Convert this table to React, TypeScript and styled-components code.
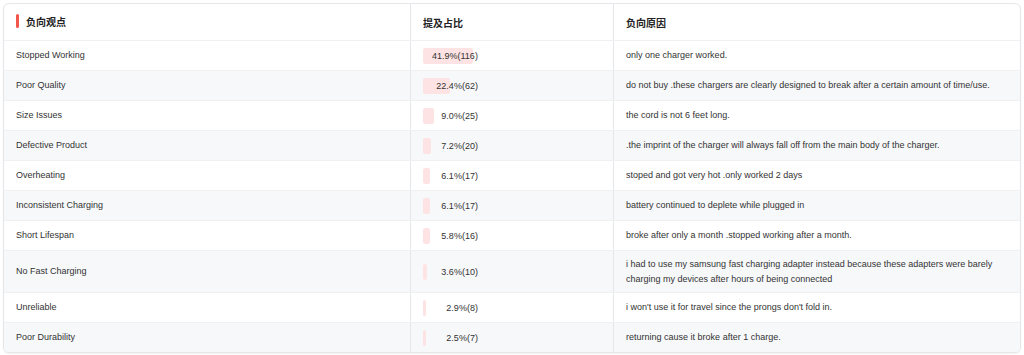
import styled, { createGlobalStyle } from "styled-components";

const GlobalStyle = createGlobalStyle`
  html, body {
    margin: 0;
    padding: 0;
    background: #ffffff;
  }
  body {
    font-family: "Liberation Sans", Arial, "Noto Sans CJK SC", sans-serif;
    color: #333333;
  }
`;

const Page = styled.div`
  padding: 3px;
`;

const Card = styled.div`
  border: 1px solid #e6e7eb;
  border-radius: 6px;
  overflow: hidden;
  box-shadow: 0 1px 2px rgba(0, 0, 0, 0.06);
  background: #fff;
`;

const Table = styled.table`
  width: 100%;
  border-collapse: collapse;
  table-layout: fixed;
`;

const HeadCell = styled.th<{ last?: boolean }>`
  text-align: left;
  font-weight: 700;
  font-size: 10px;
  color: #222;
  padding: 0 12px;
  height: 36px;
  border-bottom: 1px solid #eff0f2;
  border-right: ${(p) => (p.last ? "none" : "1px solid #e6e7eb")};
  font-family: "Liberation Sans", Arial, "Noto Sans CJK SC", sans-serif;
`;

const TitleMark = styled.span`
  display: inline-flex;
  align-items: center;
  gap: 7px;
  &::before {
    content: "";
    display: block;
    width: 3px;
    height: 14px;
    border-radius: 2px;
    background: #f2574b;
  }
`;

const Row = styled.tr<{ striped: boolean }>`
  background: ${(p) => (p.striped ? "#f7f8fa" : "#ffffff")};
  &:not(:last-child) td {
    border-bottom: 1px solid #eff0f2;
  }
`;

const Cell = styled.td<{ last?: boolean }>`
  font-size: 9px;
  line-height: 14.5px;
  color: #333;
  padding: 6px 12px;
  height: 17px;
  vertical-align: middle;
  border-right: ${(p) => (p.last ? "none" : "1px solid #e6e7eb")};
`;

const Ratio = styled.div`
  position: relative;
  width: 55px;
  height: 16px;
  line-height: 16px;
  text-align: right;
`;

const Bar = styled.div`
  position: absolute;
  left: 0;
  top: 0;
  height: 16px;
  border-radius: 2px;
  background: #fde3e3;
`;

const RatioText = styled.span`
  position: relative;
`;

type Item = { name: string; pct: number; count: number; reason: string };

const items: Item[] = [
  { name: "Stopped Working", pct: 41.9, count: 116, reason: "only one charger worked." },
  { name: "Poor Quality", pct: 22.4, count: 62, reason: "do not buy .these chargers are clearly designed to break after a certain amount of time/use." },
  { name: "Size Issues", pct: 9.0, count: 25, reason: "the cord is not 6 feet long." },
  { name: "Defective Product", pct: 7.2, count: 20, reason: ".the imprint of the charger will always fall off from the main body of the charger." },
  { name: "Overheating", pct: 6.1, count: 17, reason: "stoped and got very hot .only worked 2 days" },
  { name: "Inconsistent Charging", pct: 6.1, count: 17, reason: "battery continued to deplete while plugged in" },
  { name: "Short Lifespan", pct: 5.8, count: 16, reason: "broke after only a month .stopped working after a month." },
  { name: "No Fast Charging", pct: 3.6, count: 10, reason: "i had to use my samsung fast charging adapter instead because these adapters were barely charging my devices after hours of being connected" },
  { name: "Unreliable", pct: 2.9, count: 8, reason: "i won't use it for travel since the prongs don't fold in." },
  { name: "Poor Durability", pct: 2.5, count: 7, reason: "returning cause it broke after 1 charge." },
];

export default function App() {
  return (
    <Page>
      <GlobalStyle />
      <Card>
        <Table>
          <colgroup>
            <col style={{ width: "40%" }} />
            <col style={{ width: "20%" }} />
            <col style={{ width: "40%" }} />
          </colgroup>
          <thead>
            <tr>
              <HeadCell>
                <TitleMark>负向观点</TitleMark>
              </HeadCell>
              <HeadCell>提及占比</HeadCell>
              <HeadCell last>负向原因</HeadCell>
            </tr>
          </thead>
          <tbody>
            {items.map((it, i) => (
              <Row key={it.name} striped={i % 2 === 1}>
                <Cell>{it.name}</Cell>
                <Cell>
                  <Ratio>
                    <Bar style={{ width: `${(it.pct * 1.2).toFixed(1)}px` }} />
                    <RatioText>
                      {it.pct.toFixed(1)}%({it.count})
                    </RatioText>
                  </Ratio>
                </Cell>
                <Cell last>{it.reason}</Cell>
              </Row>
            ))}
          </tbody>
        </Table>
      </Card>
    </Page>
  );
}
